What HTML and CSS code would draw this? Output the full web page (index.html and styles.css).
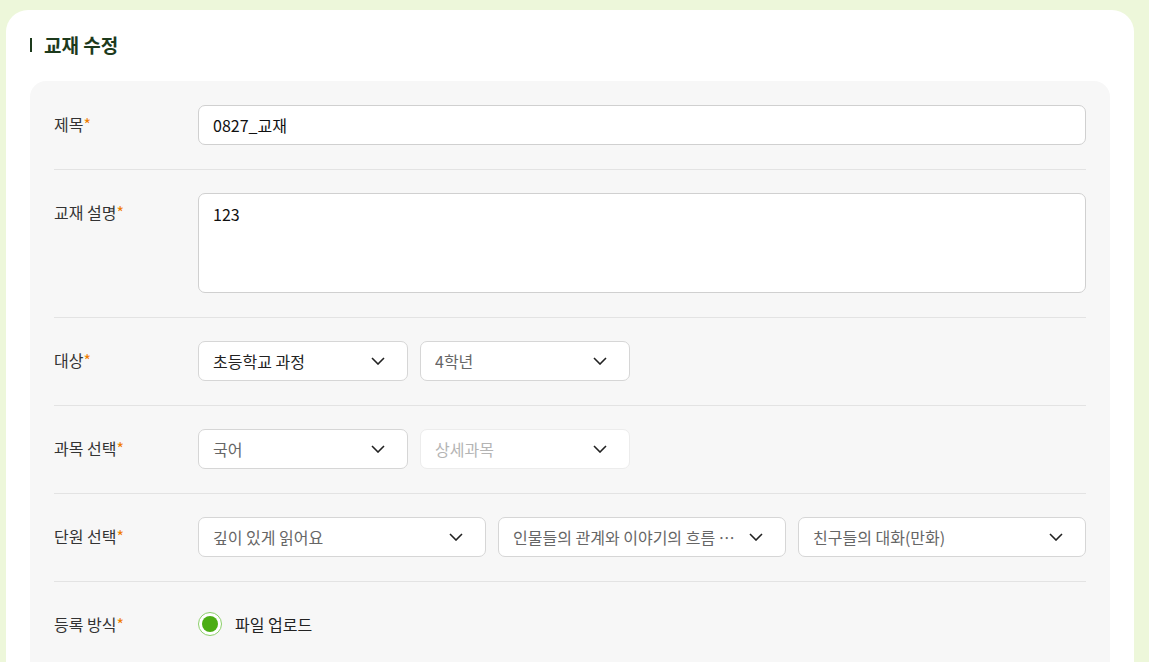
FILE: index.html
```html
<!DOCTYPE html>
<html>

<head>
    <meta charset="utf-8">
    <link rel="stylesheet" href="styles.css">
</head>

<body>
    <div class="card">
        <h2 class="card-title">교재 수정</h2>

        <form class="panel">
            <div class="row">
                <label class="row-label">제목<span class="req">*</span></label>
                <div class="row-field">
                    <input class="text-input" type="text" value="0827_교재">
                </div>
            </div>

            <div class="row">
                <label class="row-label">교재 설명<span class="req">*</span></label>
                <div class="row-field">
                    <textarea class="text-area">123</textarea>
                </div>
            </div>

            <div class="row">
                <label class="row-label">대상<span class="req">*</span></label>
                <div class="row-field">
                    <div class="select fixed">
                        <span class="select-value">초등학교 과정</span>
                        <svg class="chev" viewBox="0 0 14 8"><path d="M1 1l6 6 6-6" /></svg>
                    </div>
                    <div class="select fixed muted">
                        <span class="select-value">4학년</span>
                        <svg class="chev" viewBox="0 0 14 8"><path d="M1 1l6 6 6-6" /></svg>
                    </div>
                </div>
            </div>

            <div class="row">
                <label class="row-label">과목 선택<span class="req">*</span></label>
                <div class="row-field">
                    <div class="select fixed muted">
                        <span class="select-value">국어</span>
                        <svg class="chev" viewBox="0 0 14 8"><path d="M1 1l6 6 6-6" /></svg>
                    </div>
                    <div class="select fixed disabled">
                        <span class="select-value">상세과목</span>
                        <svg class="chev" viewBox="0 0 14 8"><path d="M1 1l6 6 6-6" /></svg>
                    </div>
                </div>
            </div>

            <div class="row">
                <label class="row-label">단원 선택<span class="req">*</span></label>
                <div class="row-field">
                    <div class="select grow muted">
                        <span class="select-value">깊이 있게 읽어요</span>
                        <svg class="chev" viewBox="0 0 14 8"><path d="M1 1l6 6 6-6" /></svg>
                    </div>
                    <div class="select grow muted">
                        <span class="select-value">인물들의 관계와 이야기의 흐름 …</span>
                        <svg class="chev" viewBox="0 0 14 8"><path d="M1 1l6 6 6-6" /></svg>
                    </div>
                    <div class="select grow muted">
                        <span class="select-value">친구들의 대화(만화)</span>
                        <svg class="chev" viewBox="0 0 14 8"><path d="M1 1l6 6 6-6" /></svg>
                    </div>
                </div>
            </div>

            <div class="row">
                <label class="row-label">등록 방식<span class="req">*</span></label>
                <div class="row-field">
                    <label class="radio">
                        <span class="radio-dot"></span>
                        파일 업로드
                    </label>
                </div>
            </div>
        </form>
    </div>
</body>

</html>
```

FILE: styles.css
```css
body {
    margin: 0;
    padding: 10px 15px 0 6px;
    background: #edf7da;
    font-family: "Noto Sans CJK KR", "Noto Sans", sans-serif;
    color: #333;
    height: 662px;
    box-sizing: border-box;
    overflow: hidden;
}

.card {
    background: #fff;
    border-radius: 22px;
    padding: 20px 24px 0 24px;
    height: 700px;
}

.card-title {
    margin: 0 0 21px 0;
    font-size: 19px;
    font-weight: 700;
    color: #1d3a1c;
    line-height: 30px;
    display: flex;
    align-items: center;
}

.card-title::before {
    content: "";
    width: 2px;
    height: 14px;
    background: #1d3a1c;
    margin-right: 12px;
}

.panel {
    background: #f7f7f7;
    border-radius: 16px;
    padding: 1px 24px 0;
    height: 600px;
}

.row {
    display: flex;
    align-items: flex-start;
    padding: 23px 0 24px;
    border-bottom: 1px solid #e3e3e3;
}

.row:last-child {
    border-bottom: none;
}

.row-label {
    width: 144px;
    flex-shrink: 0;
    font-size: 16px;
    line-height: 38px;
    color: #333;
}

.req {
    color: #f07d00;
}

.row-field {
    flex: 1;
    display: flex;
    gap: 12px;
}

.text-input,
.text-area {
    flex: 1;
    box-sizing: border-box;
    border: 1px solid #d0d0d0;
    border-radius: 7px;
    background: #fff;
    font-family: inherit;
    font-size: 16px;
    color: #111;
    padding: 0 14px;
    outline: none;
}

.text-input {
    height: 40px;
}

.text-area {
    height: 100px;
    padding-top: 9px;
    resize: none;
    line-height: 22px;
}

.select {
    box-sizing: border-box;
    height: 40px;
    display: flex;
    align-items: center;
    justify-content: space-between;
    gap: 8px;
    padding: 0 22px 0 14px;
    background: #fff;
    border: 1px solid #d6d6d6;
    border-radius: 7px;
    font-size: 16px;
    color: #222;
}

.select.fixed {
    width: 210px;
}

.select.grow {
    flex: 1;
    min-width: 0;
}

.select.muted {
    color: #666;
}

.select.disabled {
    color: #b4b4b4;
    border-color: #ececec;
}

.select-value {
    white-space: nowrap;
    overflow: hidden;
}

.chev {
    width: 14px;
    height: 8px;
    flex-shrink: 0;
    fill: none;
    stroke: #222;
    stroke-width: 1.6;
}

.radio {
    display: flex;
    align-items: center;
    gap: 13px;
    font-size: 16px;
    line-height: 38px;
    color: #222;
}

.radio-dot {
    width: 24px;
    height: 24px;
    box-sizing: border-box;
    border-radius: 50%;
    border: 1.5px solid #8ccf6a;
    background: #fff;
    display: flex;
    align-items: center;
    justify-content: center;
}

.radio-dot::after {
    content: "";
    width: 16px;
    height: 16px;
    border-radius: 50%;
    background: #4cad14;
}
```
